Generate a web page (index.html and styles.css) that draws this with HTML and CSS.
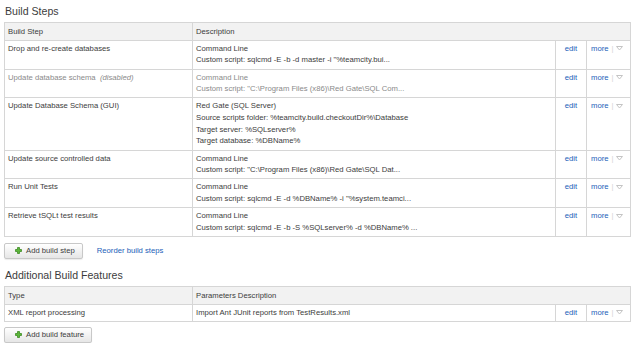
FILE: index.html
```html
<!doctype html>
<html lang="en">

    <head>
        <title>Build Steps</title>
        <link rel="stylesheet" href="styles.css">
    </head>

    <body>

        <div id="divSettings">

            <h2 class="hSection">Build Steps</h2>

            <table class="tblSettings">
                <colgroup>
                    <col class="colName">
                    <col class="colDesc">
                    <col class="colEdit">
                    <col class="colMore">
                </colgroup>
                <tr>
                    <th class="thHeader">Build Step</th>
                    <th class="thHeader" colspan="3">Description</th>
                </tr>
                <tr>
                    <td class="tdCell">Drop and re-create databases</td>
                    <td class="tdCell">Command Line<br>Custom script: sqlcmd -E -b -d master -i "%teamcity.bui...</td>
                    <td class="tdEdit"><a class="lnk" href="#">edit</a></td>
                    <td class="tdMore"><a class="lnk" href="#">more</a><span class="sep">|</span><svg class="arrow" width="7" height="5" viewBox="0 0 7 5"><path d="M0.5 0.5 L6.5 0.5 L3.5 4 Z" fill="none" stroke="#c4c4c4" stroke-width="1"/></svg></td>
                </tr>
                <tr class="trDisabled">
                    <td class="tdCell">Update database schema &nbsp;<i>(disabled)</i></td>
                    <td class="tdCell">Command Line<br>Custom script: "C:\Program Files (x86)\Red Gate\SQL Com...</td>
                    <td class="tdEdit"><a class="lnk" href="#">edit</a></td>
                    <td class="tdMore"><a class="lnk" href="#">more</a><span class="sep">|</span><svg class="arrow" width="7" height="5" viewBox="0 0 7 5"><path d="M0.5 0.5 L6.5 0.5 L3.5 4 Z" fill="none" stroke="#c4c4c4" stroke-width="1"/></svg></td>
                </tr>
                <tr>
                    <td class="tdCell">Update Database Schema (GUI)</td>
                    <td class="tdCell">Red Gate (SQL Server)<br>Source scripts folder: %teamcity.build.checkoutDir%\Database<br>Target server: %SQLserver%<br>Target database: %DBName%</td>
                    <td class="tdEdit"><a class="lnk" href="#">edit</a></td>
                    <td class="tdMore"><a class="lnk" href="#">more</a><span class="sep">|</span><svg class="arrow" width="7" height="5" viewBox="0 0 7 5"><path d="M0.5 0.5 L6.5 0.5 L3.5 4 Z" fill="none" stroke="#c4c4c4" stroke-width="1"/></svg></td>
                </tr>
                <tr>
                    <td class="tdCell">Update source controlled data</td>
                    <td class="tdCell">Command Line<br>Custom script: "C:\Program Files (x86)\Red Gate\SQL Dat...</td>
                    <td class="tdEdit"><a class="lnk" href="#">edit</a></td>
                    <td class="tdMore"><a class="lnk" href="#">more</a><span class="sep">|</span><svg class="arrow" width="7" height="5" viewBox="0 0 7 5"><path d="M0.5 0.5 L6.5 0.5 L3.5 4 Z" fill="none" stroke="#c4c4c4" stroke-width="1"/></svg></td>
                </tr>
                <tr>
                    <td class="tdCell">Run Unit Tests</td>
                    <td class="tdCell">Command Line<br>Custom script: sqlcmd -E -d %DBName% -i "%system.teamci...</td>
                    <td class="tdEdit"><a class="lnk" href="#">edit</a></td>
                    <td class="tdMore"><a class="lnk" href="#">more</a><span class="sep">|</span><svg class="arrow" width="7" height="5" viewBox="0 0 7 5"><path d="M0.5 0.5 L6.5 0.5 L3.5 4 Z" fill="none" stroke="#c4c4c4" stroke-width="1"/></svg></td>
                </tr>
                <tr>
                    <td class="tdCell">Retrieve tSQLt test results</td>
                    <td class="tdCell">Command Line<br>Custom script: sqlcmd -E -b -S %SQLserver% -d %DBName% ...</td>
                    <td class="tdEdit"><a class="lnk" href="#">edit</a></td>
                    <td class="tdMore"><a class="lnk" href="#">more</a><span class="sep">|</span><svg class="arrow" width="7" height="5" viewBox="0 0 7 5"><path d="M0.5 0.5 L6.5 0.5 L3.5 4 Z" fill="none" stroke="#c4c4c4" stroke-width="1"/></svg></td>
                </tr>
            </table>

            <div class="divActions">
                <button class="btnAdd" type="button"><svg class="plus" width="7" height="7" viewBox="0 0 7 7"><path d="M2.5 0.5 H4.5 V2.5 H6.5 V4.5 H4.5 V6.5 H2.5 V4.5 H0.5 V2.5 H2.5 Z" fill="#5cb83a" stroke="#3c8a22" stroke-width="0.8" stroke-linejoin="round"/></svg>Add build step</button>
                <a class="lnk lnkReorder" href="#">Reorder build steps</a>
            </div>

            <h2 class="hSection hSecond">Additional Build Features</h2>

            <table class="tblSettings">
                <colgroup>
                    <col class="colName">
                    <col class="colDesc">
                    <col class="colEdit">
                    <col class="colMore">
                </colgroup>
                <tr>
                    <th class="thHeader">Type</th>
                    <th class="thHeader" colspan="3">Parameters Description</th>
                </tr>
                <tr>
                    <td class="tdCell">XML report processing</td>
                    <td class="tdCell">Import Ant JUnit reports from TestResults.xml</td>
                    <td class="tdEdit"><a class="lnk" href="#">edit</a></td>
                    <td class="tdMore"><a class="lnk" href="#">more</a><span class="sep">|</span><svg class="arrow" width="7" height="5" viewBox="0 0 7 5"><path d="M0.5 0.5 L6.5 0.5 L3.5 4 Z" fill="none" stroke="#c4c4c4" stroke-width="1"/></svg></td>
                </tr>
            </table>

            <div class="divActions divLast">
                <button class="btnAdd" type="button"><svg class="plus" width="7" height="7" viewBox="0 0 7 7"><path d="M2.5 0.5 H4.5 V2.5 H6.5 V4.5 H4.5 V6.5 H2.5 V4.5 H0.5 V2.5 H2.5 Z" fill="#5cb83a" stroke="#3c8a22" stroke-width="0.8" stroke-linejoin="round"/></svg>Add build feature</button>
            </div>

        </div>

    </body>

</html>
```

FILE: styles.css
```css
* {
    box-sizing: border-box;
}

body {
    margin: 0;
    background: #fff;
    color: #3c3c3c;
    font-family: "Liberation Sans", Arial, sans-serif;
    font-size: 7.7px;
}

#divSettings {
    padding: 0 0 0 4px;
}

.hSection {
    margin: 4px 0 4px 1px;
    font-size: 10.6px;
    font-weight: normal;
    line-height: 14px;
    color: #3c3c3c;
}

.hSecond {
    margin-top: 9px;
    margin-bottom: 4px;
}

.tblSettings {
    width: 626px;
    table-layout: fixed;
    border-collapse: collapse;
    border: 1px solid #d6d6d6;
}

.colName { width: 188px; }
.colDesc { width: 363px; }
.colEdit { width: 31px; }
.colMore { width: 44px; }

.thHeader {
    background: #f2f2f2;
    font-size: 7.7px;
    font-weight: normal;
    text-align: left;
    line-height: 11.7px;
    padding: 3px 3px 2px 3px;
    border: 1px solid #d6d6d6;
}

.tdCell,
.tdEdit,
.tdMore {
    vertical-align: top;
    line-height: 11.7px;
    padding: 2px 3px 2.4px 3px;
    border: 1px solid #d6d6d6;
    white-space: nowrap;
    overflow: hidden;
}

.tdEdit {
    text-align: center;
}

.tdMore {
    padding-left: 4px;
}

.trDisabled .tdCell {
    color: #8a8a8a;
}

.trDisabled i {
    font-style: italic;
}

.lnk {
    color: #2160b8;
    text-decoration: none;
}

.sep {
    color: #d4d4d4;
    margin: 0 2px 0 3px;
}

.arrow {
    vertical-align: middle;
}

.divActions {
    display: flex;
    align-items: center;
    margin-top: 6px;
}

.divLast {
    margin-top: 5px;
}

.btnAdd {
    display: flex;
    align-items: center;
    height: 16px;
    padding: 0 7px 0 10px;
    font-family: "Liberation Sans", Arial, sans-serif;
    font-size: 7.7px;
    color: #3c3c3c;
    background: linear-gradient(#ffffff, #e6e6e6);
    border: 1px solid #c8c8c8;
    border-radius: 2px;
    box-shadow: 0 1px 1px rgba(0, 0, 0, 0.08);
}

.plus {
    margin-right: 4px;
}

.lnkReorder {
    margin-left: 14px;
}
```
